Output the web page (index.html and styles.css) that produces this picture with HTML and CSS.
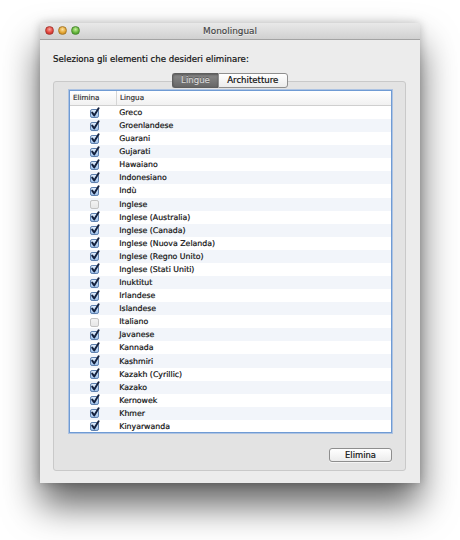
FILE: index.html
```html
<!DOCTYPE html>
<html lang="it">
<head>
<meta charset="utf-8">
<title>Monolingual</title>
<link rel="stylesheet" href="styles.css">
</head>
<body>
<svg class="defs" width="0" height="0" aria-hidden="true">
  <defs>
    <linearGradient id="cbOn" x1="0" y1="0" x2="0" y2="1">
      <stop offset="0" stop-color="#e3eefb"/>
      <stop offset="1" stop-color="#9cc0ea"/>
    </linearGradient>
    <linearGradient id="cbOff" x1="0" y1="0" x2="0" y2="1">
      <stop offset="0" stop-color="#f4f4f4"/>
      <stop offset="1" stop-color="#e6e6e6"/>
    </linearGradient>
    <symbol id="on" viewBox="0 0 11 11">
      <rect x="1.5" y="2.5" width="8" height="8" rx="1.6" fill="url(#cbOn)" stroke="#5d7fae"/>
      <path d="M3.2 5.6 L5.2 8.4 L9.6 1.2" fill="none" stroke="#13203d" stroke-width="1.9" stroke-linecap="round" stroke-linejoin="round"/>
    </symbol>
    <symbol id="off" viewBox="0 0 11 11">
      <rect x="1.5" y="2.5" width="8" height="8" rx="1.6" fill="url(#cbOff)" stroke="#c2c2c2"/>
    </symbol>
  </defs>
</svg>

<div class="window">
  <div class="titlebar">
    <div class="lights">
      <span class="light red"></span>
      <span class="light yellow"></span>
      <span class="light green"></span>
    </div>
    <div class="title">Monolingual</div>
  </div>
  <div class="content">
    <div class="prompt">Seleziona gli elementi che desideri eliminare:</div>
    <div class="tabview">
      <div class="tabs">
        <span class="tab active">Lingue</span>
        <span class="tab">Architetture</span>
      </div>
      <div class="tabbox">
        <div class="table">
          <div class="thead">
            <span class="th c1">Elimina</span>
            <span class="th c2">Lingua</span>
          </div>
          <div class="tbody">
            <div class="row"><span class="c1"><svg class="cb"><use href="#on"/></svg></span><span class="c2">Greco</span></div>
            <div class="row"><span class="c1"><svg class="cb"><use href="#on"/></svg></span><span class="c2">Groenlandese</span></div>
            <div class="row"><span class="c1"><svg class="cb"><use href="#on"/></svg></span><span class="c2">Guarani</span></div>
            <div class="row"><span class="c1"><svg class="cb"><use href="#on"/></svg></span><span class="c2">Gujarati</span></div>
            <div class="row"><span class="c1"><svg class="cb"><use href="#on"/></svg></span><span class="c2">Hawaiano</span></div>
            <div class="row"><span class="c1"><svg class="cb"><use href="#on"/></svg></span><span class="c2">Indonesiano</span></div>
            <div class="row"><span class="c1"><svg class="cb"><use href="#on"/></svg></span><span class="c2">Indù</span></div>
            <div class="row"><span class="c1"><svg class="cb"><use href="#off"/></svg></span><span class="c2">Inglese</span></div>
            <div class="row"><span class="c1"><svg class="cb"><use href="#on"/></svg></span><span class="c2">Inglese (Australia)</span></div>
            <div class="row"><span class="c1"><svg class="cb"><use href="#on"/></svg></span><span class="c2">Inglese (Canada)</span></div>
            <div class="row"><span class="c1"><svg class="cb"><use href="#on"/></svg></span><span class="c2">Inglese (Nuova Zelanda)</span></div>
            <div class="row"><span class="c1"><svg class="cb"><use href="#on"/></svg></span><span class="c2">Inglese (Regno Unito)</span></div>
            <div class="row"><span class="c1"><svg class="cb"><use href="#on"/></svg></span><span class="c2">Inglese (Stati Uniti)</span></div>
            <div class="row"><span class="c1"><svg class="cb"><use href="#on"/></svg></span><span class="c2">Inuktitut</span></div>
            <div class="row"><span class="c1"><svg class="cb"><use href="#on"/></svg></span><span class="c2">Irlandese</span></div>
            <div class="row"><span class="c1"><svg class="cb"><use href="#on"/></svg></span><span class="c2">Islandese</span></div>
            <div class="row"><span class="c1"><svg class="cb"><use href="#off"/></svg></span><span class="c2">Italiano</span></div>
            <div class="row"><span class="c1"><svg class="cb"><use href="#on"/></svg></span><span class="c2">Javanese</span></div>
            <div class="row"><span class="c1"><svg class="cb"><use href="#on"/></svg></span><span class="c2">Kannada</span></div>
            <div class="row"><span class="c1"><svg class="cb"><use href="#on"/></svg></span><span class="c2">Kashmiri</span></div>
            <div class="row"><span class="c1"><svg class="cb"><use href="#on"/></svg></span><span class="c2">Kazakh (Cyrillic)</span></div>
            <div class="row"><span class="c1"><svg class="cb"><use href="#on"/></svg></span><span class="c2">Kazako</span></div>
            <div class="row"><span class="c1"><svg class="cb"><use href="#on"/></svg></span><span class="c2">Kernowek</span></div>
            <div class="row"><span class="c1"><svg class="cb"><use href="#on"/></svg></span><span class="c2">Khmer</span></div>
            <div class="row"><span class="c1"><svg class="cb"><use href="#on"/></svg></span><span class="c2">Kinyarwanda</span></div>
          </div>
        </div>
        <div class="actions">
          <button class="btn">Elimina</button>
        </div>
      </div>
    </div>
  </div>
</div>
</body>
</html>
```

FILE: styles.css
```css
html, body {
  margin: 0;
  padding: 0;
  background: #ffffff;
}

body {
  font-family: "DejaVu Sans", "Liberation Sans", sans-serif;
  color: #111111;
  padding-top: 23px;
  padding-left: 40px;
  min-height: 540px;
  box-sizing: border-box;
  overflow: hidden;
}

.defs {
  position: absolute;
  width: 0;
  height: 0;
}

.window {
  width: 380px;
  height: 460px;
  background: #ececec;
  border-radius: 4px 4px 0 0;
  box-shadow: 0 0 10px rgba(0, 0, 0, 0.22), 0 22px 36px rgba(0, 0, 0, 0.62);
  display: flex;
  flex-direction: column;
  overflow: hidden;
}

.titlebar {
  height: 16.5px;
  flex: none;
  box-sizing: border-box;
  background: linear-gradient(#e9e9e9, #d0d0d0);
  border-bottom: 1px solid #a3a3a3;
  display: flex;
  align-items: center;
  position: relative;
}

.lights {
  display: flex;
  gap: 4.3px;
  padding-left: 4.8px;
  z-index: 1;
}

.light {
  width: 9px;
  height: 9px;
  border-radius: 50%;
  box-sizing: border-box;
}

.red {
  background: radial-gradient(circle at 50% 35%, #f7a49c 0, #e4463d 55%, #b8261f 100%);
  border: 1px solid #a83a33;
}

.yellow {
  background: radial-gradient(circle at 50% 35%, #fbe1a0 0, #e4a634 55%, #b87a14 100%);
  border: 1px solid #a87a2b;
}

.green {
  background: radial-gradient(circle at 50% 35%, #c7ef9d 0, #67b83e 55%, #3c8a1e 100%);
  border: 1px solid #4c8a32;
}

.title {
  position: absolute;
  left: 0;
  right: 0;
  top: 0;
  bottom: 0;
  display: flex;
  align-items: center;
  justify-content: center;
  font-size: 8.9px;
  color: #444444;
  -webkit-text-stroke: 0.15px #444444;
  text-shadow: 0 1px 0 rgba(255, 255, 255, 0.6);
}

.content {
  flex: 1;
  display: flex;
  flex-direction: column;
  padding: 14.5px 14px 12px 13px;
}

.prompt {
  font-size: 8.6px;
  line-height: 11px;
  height: 11px;
  color: #111111;
  -webkit-text-stroke: 0.2px #111111;
}

.tabview {
  margin-top: 8.3px;
  flex: 1;
  display: flex;
  flex-direction: column;
}

.tabs {
  display: flex;
  justify-content: center;
  position: relative;
  z-index: 1;
  height: 14.4px;
  padding-left: 1px;
}

.tab {
  box-sizing: border-box;
  height: 14.4px;
  display: flex;
  align-items: center;
  justify-content: center;
  font-size: 8.6px;
  border: 1px solid #8f8f8f;
  background: linear-gradient(#ffffff, #ececec);
  color: #111111;
  -webkit-text-stroke: 0.2px #111111;
}

.tab:first-child {
  width: 45.6px;
  border-radius: 3px 0 0 3px;
  border-right: none;
}

.tab:last-child {
  width: 70px;
  border-radius: 0 3px 3px 0;
}

.tab.active {
  background: linear-gradient(#8a8a8a, #676767);
  border-color: #5e5e5e;
  color: #d6d6d6;
  -webkit-text-stroke: 0.15px #d6d6d6;
  text-shadow: 0 -1px 0 rgba(0, 0, 0, 0.35);
  box-shadow: inset 0 1px 2px rgba(0, 0, 0, 0.35);
}

.tabbox {
  margin-top: -7px;
  flex: 1;
  box-sizing: border-box;
  border: 1px solid #c9c9c9;
  border-radius: 3px;
  background: #e3e3e3;
  display: flex;
  flex-direction: column;
  padding: 8.3px 13px 8px 15px;
}

.table {
  box-sizing: border-box;
  border: 1px solid #6f9bd4;
  box-shadow: 0 0 0 1px rgba(130, 170, 225, 0.55);
  background: #ffffff;
  height: 343px;
  overflow: hidden;
}

.thead {
  height: 15px;
  box-sizing: border-box;
  display: flex;
  align-items: center;
  background: linear-gradient(#ffffff, #f1f1f1);
  border-bottom: 1px solid #cfcfcf;
}

.th {
  font-size: 7.2px;
  color: #2a2a2a;
  -webkit-text-stroke: 0.15px #2a2a2a;
  height: 100%;
  display: flex;
  align-items: center;
  box-sizing: border-box;
}

.th.c1 {
  width: 47px;
  padding-left: 3px;
  border-right: 1px solid #d6d6d6;
}

.th.c2 {
  padding-left: 3px;
}

.row {
  height: 13.08px;
  display: flex;
  align-items: center;
}

.row:nth-child(even) {
  background: #f2f5fa;
}

.row .c1 {
  width: 47px;
  display: flex;
  justify-content: center;
  align-items: center;
}

.row .c2 {
  padding-left: 2.3px;
  font-size: 7.8px;
  color: #111111;
  -webkit-text-stroke: 0.2px #111111;
}

.cb {
  width: 11px;
  height: 11px;
  display: block;
  margin-top: -1px;
  margin-left: 1px;
}

.actions {
  display: flex;
  justify-content: flex-end;
  margin-top: 15px;
}

.btn {
  width: 63px;
  height: 14px;
  box-sizing: border-box;
  padding: 0;
  font-family: "DejaVu Sans", "Liberation Sans", sans-serif;
  font-size: 8.4px;
  color: #111111;
  -webkit-text-stroke: 0.2px #111111;
  border: 1px solid #8e8e8e;
  border-radius: 3px;
  background: linear-gradient(#ffffff, #ececec);
  box-shadow: 0 1px 0 rgba(255, 255, 255, 0.6);
}
```
